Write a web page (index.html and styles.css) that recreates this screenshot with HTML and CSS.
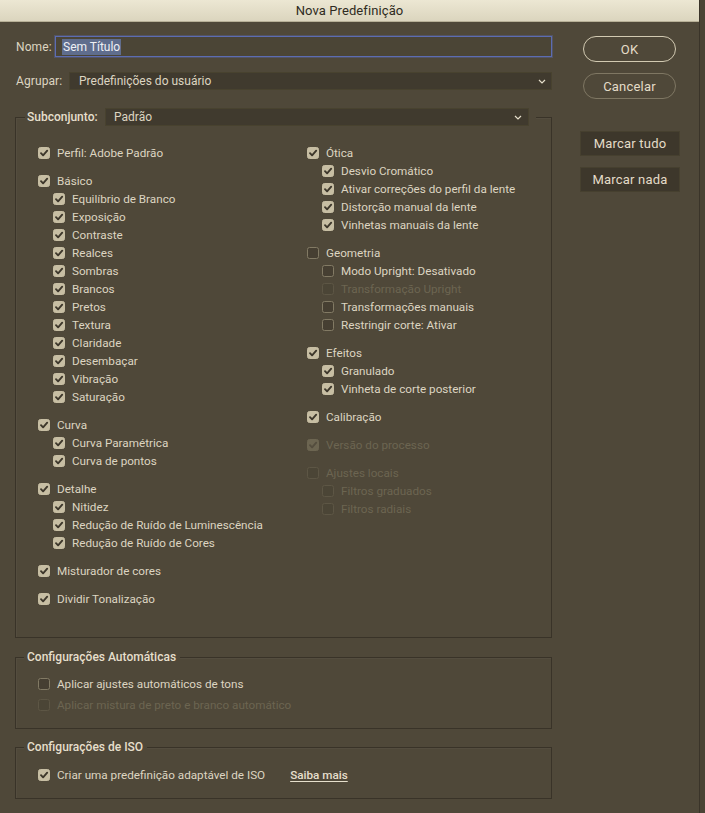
FILE: index.html
```html
<!DOCTYPE html>
<html lang="pt">
<head>
<meta charset="utf-8">
<title>Nova Predefinição</title>
<link rel="stylesheet" href="styles.css">
</head>
<body>
<div class="window">
  <div class="titlebar">Nova Predefinição</div>
  <div class="main">
    <div class="left">
      <div class="field-row name-row">
        <span class="field-label name-label">Nome:</span>
        <div class="text-input"><span class="selected">Sem Título</span></div>
      </div>
      <div class="field-row group-row">
        <span class="field-label group-label">Agrupar:</span>
        <div class="select wide-select"><span>Predefinições do usuário</span><svg class="chev" width="8" height="5" viewBox="0 0 8 5"><path d="M1 1 L4 4 L7 1" fill="none" stroke="#e6dfcc" stroke-width="1.2"/></svg></div>
      </div>

      <div class="box subset-box">
        <div class="box-head subset-head">
          <span class="box-title subset-title">Subconjunto:</span>
          <div class="select subset-select"><span>Padrão</span><svg class="chev" width="8" height="5" viewBox="0 0 8 5"><path d="M1 1 L4 4 L7 1" fill="none" stroke="#e6dfcc" stroke-width="1.2"/></svg></div>
        </div>
        <div class="columns">
          <div class="col col-left">
            <div class="grp">
              <div class="item on"><span class="chk"><svg viewBox="0 0 12 12"><path d="M3 6.2 L5.1 8.3 L9.2 3.7"/></svg></span>Perfil: Adobe Padrão</div>
            </div>
            <div class="grp">
              <div class="item on"><span class="chk"><svg viewBox="0 0 12 12"><path d="M3 6.2 L5.1 8.3 L9.2 3.7"/></svg></span>Básico</div>
              <div class="item sub on"><span class="chk"><svg viewBox="0 0 12 12"><path d="M3 6.2 L5.1 8.3 L9.2 3.7"/></svg></span>Equilíbrio de Branco</div>
              <div class="item sub on"><span class="chk"><svg viewBox="0 0 12 12"><path d="M3 6.2 L5.1 8.3 L9.2 3.7"/></svg></span>Exposição</div>
              <div class="item sub on"><span class="chk"><svg viewBox="0 0 12 12"><path d="M3 6.2 L5.1 8.3 L9.2 3.7"/></svg></span>Contraste</div>
              <div class="item sub on"><span class="chk"><svg viewBox="0 0 12 12"><path d="M3 6.2 L5.1 8.3 L9.2 3.7"/></svg></span>Realces</div>
              <div class="item sub on"><span class="chk"><svg viewBox="0 0 12 12"><path d="M3 6.2 L5.1 8.3 L9.2 3.7"/></svg></span>Sombras</div>
              <div class="item sub on"><span class="chk"><svg viewBox="0 0 12 12"><path d="M3 6.2 L5.1 8.3 L9.2 3.7"/></svg></span>Brancos</div>
              <div class="item sub on"><span class="chk"><svg viewBox="0 0 12 12"><path d="M3 6.2 L5.1 8.3 L9.2 3.7"/></svg></span>Pretos</div>
              <div class="item sub on"><span class="chk"><svg viewBox="0 0 12 12"><path d="M3 6.2 L5.1 8.3 L9.2 3.7"/></svg></span>Textura</div>
              <div class="item sub on"><span class="chk"><svg viewBox="0 0 12 12"><path d="M3 6.2 L5.1 8.3 L9.2 3.7"/></svg></span>Claridade</div>
              <div class="item sub on"><span class="chk"><svg viewBox="0 0 12 12"><path d="M3 6.2 L5.1 8.3 L9.2 3.7"/></svg></span>Desembaçar</div>
              <div class="item sub on"><span class="chk"><svg viewBox="0 0 12 12"><path d="M3 6.2 L5.1 8.3 L9.2 3.7"/></svg></span>Vibração</div>
              <div class="item sub on"><span class="chk"><svg viewBox="0 0 12 12"><path d="M3 6.2 L5.1 8.3 L9.2 3.7"/></svg></span>Saturação</div>
            </div>
            <div class="grp">
              <div class="item on"><span class="chk"><svg viewBox="0 0 12 12"><path d="M3 6.2 L5.1 8.3 L9.2 3.7"/></svg></span>Curva</div>
              <div class="item sub on"><span class="chk"><svg viewBox="0 0 12 12"><path d="M3 6.2 L5.1 8.3 L9.2 3.7"/></svg></span>Curva Paramétrica</div>
              <div class="item sub on"><span class="chk"><svg viewBox="0 0 12 12"><path d="M3 6.2 L5.1 8.3 L9.2 3.7"/></svg></span>Curva de pontos</div>
            </div>
            <div class="grp">
              <div class="item on"><span class="chk"><svg viewBox="0 0 12 12"><path d="M3 6.2 L5.1 8.3 L9.2 3.7"/></svg></span>Detalhe</div>
              <div class="item sub on"><span class="chk"><svg viewBox="0 0 12 12"><path d="M3 6.2 L5.1 8.3 L9.2 3.7"/></svg></span>Nitidez</div>
              <div class="item sub on"><span class="chk"><svg viewBox="0 0 12 12"><path d="M3 6.2 L5.1 8.3 L9.2 3.7"/></svg></span>Redução de Ruído de Luminescência</div>
              <div class="item sub on"><span class="chk"><svg viewBox="0 0 12 12"><path d="M3 6.2 L5.1 8.3 L9.2 3.7"/></svg></span>Redução de Ruído de Cores</div>
            </div>
            <div class="grp">
              <div class="item on"><span class="chk"><svg viewBox="0 0 12 12"><path d="M3 6.2 L5.1 8.3 L9.2 3.7"/></svg></span>Misturador de cores</div>
            </div>
            <div class="grp">
              <div class="item on"><span class="chk"><svg viewBox="0 0 12 12"><path d="M3 6.2 L5.1 8.3 L9.2 3.7"/></svg></span>Dividir Tonalização</div>
            </div>
          </div>

          <div class="col col-right">
            <div class="grp">
              <div class="item on"><span class="chk"><svg viewBox="0 0 12 12"><path d="M3 6.2 L5.1 8.3 L9.2 3.7"/></svg></span>Ótica</div>
              <div class="item sub on"><span class="chk"><svg viewBox="0 0 12 12"><path d="M3 6.2 L5.1 8.3 L9.2 3.7"/></svg></span>Desvio Cromático</div>
              <div class="item sub on"><span class="chk"><svg viewBox="0 0 12 12"><path d="M3 6.2 L5.1 8.3 L9.2 3.7"/></svg></span>Ativar correções do perfil da lente</div>
              <div class="item sub on"><span class="chk"><svg viewBox="0 0 12 12"><path d="M3 6.2 L5.1 8.3 L9.2 3.7"/></svg></span>Distorção manual da lente</div>
              <div class="item sub on"><span class="chk"><svg viewBox="0 0 12 12"><path d="M3 6.2 L5.1 8.3 L9.2 3.7"/></svg></span>Vinhetas manuais da lente</div>
            </div>
            <div class="grp">
              <div class="item"><span class="chk"></span>Geometria</div>
              <div class="item sub"><span class="chk"></span>Modo Upright: Desativado</div>
              <div class="item sub disabled"><span class="chk"></span>Transformação Upright</div>
              <div class="item sub"><span class="chk"></span>Transformações manuais</div>
              <div class="item sub"><span class="chk"></span>Restringir corte: Ativar</div>
            </div>
            <div class="grp">
              <div class="item on"><span class="chk"><svg viewBox="0 0 12 12"><path d="M3 6.2 L5.1 8.3 L9.2 3.7"/></svg></span>Efeitos</div>
              <div class="item sub on"><span class="chk"><svg viewBox="0 0 12 12"><path d="M3 6.2 L5.1 8.3 L9.2 3.7"/></svg></span>Granulado</div>
              <div class="item sub on"><span class="chk"><svg viewBox="0 0 12 12"><path d="M3 6.2 L5.1 8.3 L9.2 3.7"/></svg></span>Vinheta de corte posterior</div>
            </div>
            <div class="grp">
              <div class="item on"><span class="chk"><svg viewBox="0 0 12 12"><path d="M3 6.2 L5.1 8.3 L9.2 3.7"/></svg></span>Calibração</div>
            </div>
            <div class="grp">
              <div class="item on disabled"><span class="chk"><svg viewBox="0 0 12 12"><path d="M3 6.2 L5.1 8.3 L9.2 3.7"/></svg></span>Versão do processo</div>
            </div>
            <div class="grp">
              <div class="item disabled"><span class="chk"></span>Ajustes locais</div>
              <div class="item sub disabled"><span class="chk"></span>Filtros graduados</div>
              <div class="item sub disabled"><span class="chk"></span>Filtros radiais</div>
            </div>
          </div>
        </div>
      </div>

      <div class="box auto-box">
        <div class="box-head"><span class="box-title">Configurações Automáticas</span></div>
        <div class="box-rows">
          <div class="item"><span class="chk"></span>Aplicar ajustes automáticos de tons</div>
          <div class="item disabled"><span class="chk"></span>Aplicar mistura de preto e branco automático</div>
        </div>
      </div>

      <div class="box iso-box">
        <div class="box-head"><span class="box-title">Configurações de ISO</span></div>
        <div class="box-rows iso-rows">
          <div class="item on"><span class="chk"><svg viewBox="0 0 12 12"><path d="M3 6.2 L5.1 8.3 L9.2 3.7"/></svg></span>Criar uma predefinição adaptável de ISO<a class="link" href="#">Saiba mais</a></div>
        </div>
      </div>
    </div>

    <div class="right">
      <button class="pill ok">OK</button>
      <button class="pill cancel">Cancelar</button>
      <button class="flat mark-all">Marcar tudo</button>
      <button class="flat mark-none">Marcar nada</button>
    </div>
  </div>
</div>
</body>
</html>
```

FILE: styles.css
```css
* { box-sizing: border-box; }

html, body {
  margin: 0;
  padding: 0;
}

body {
  background: #4a4435;
  font-family: Roboto, "Liberation Sans", sans-serif;
  font-size: 11.7px;
  letter-spacing: 0;
  color: #ddd5c1;
}

.window {
  width: 700px;
  height: 813px;
  background: #4f4839;
  border-right: 1px solid #3a3429;
}

.titlebar {
  height: 22px;
  display: flex;
  align-items: center;
  justify-content: center;
  font-size: 13px;
  letter-spacing: 0.1px;
  color: #2f2b22;
  background: linear-gradient(#ece7d3, #dbd5be);
  border-bottom: 1px solid #b7b097;
}

.main {
  display: flex;
  padding-left: 15px;
}

.left {
  width: 537px;
  flex: 0 0 537px;
}

.field-row {
  display: flex;
  align-items: center;
}

.field-label {
  padding-left: 1px;
  color: #ddd5c1;
  font-size: 12px;
  letter-spacing: 0.1px;
}

.name-row {
  margin-top: 14px;
  height: 21px;
}

.name-label { flex: 0 0 40px; }

.text-input {
  flex: 1;
  height: 21px;
  border: 1px solid #5c6cb2;
  box-shadow: 0 0 0 1px rgba(92, 108, 178, 0.35);
  background: #4b4536;
  padding-left: 6px;
  display: flex;
  align-items: center;
  font-size: 12px;
}

.selected {
  background: #5f6d8d;
  color: #eef0f4;
  line-height: 16px;
  padding: 0 1px;
}

.group-row {
  margin-top: 15px;
  height: 18px;
}

.group-label { flex: 0 0 54px; }

.select {
  height: 18px;
  background: #403a2e;
  border: 1px solid #48422f;
  display: flex;
  align-items: center;
  justify-content: space-between;
  padding: 0 5px 0 9px;
  font-size: 12px;
}

.wide-select { flex: 1; }

.chev { flex: 0 0 auto; }

/* group boxes */
.box {
  border: 1px solid #393328;
  box-shadow: inset 1px 1px 0 rgba(255, 255, 255, 0.03);
}

.box-head {
  display: flex;
  align-items: center;
  width: fit-content;
  background: #4f4839;
  margin-left: 8px;
  padding: 0 4px 0 3px;
  height: 16px;
  margin-top: -9px;
}

.box-title {
  font-weight: 500;
  font-size: 12px;
  color: #e6dfcc;
}

.subset-box {
  margin-top: 27px;
  padding-bottom: 29px;
}

.subset-head {
  height: 18px;
  margin-top: -10px;
  margin-left: 9px;
  padding: 0 7px 0 2px;
}

.subset-title { width: 78px; }

.subset-select {
  width: 424px;
  padding-left: 8px;
  padding-right: 6px;
}

.columns {
  display: flex;
  margin-top: 18px;
}

.col-left {
  width: 291px;
  padding-left: 22px;
}

.grp + .grp { margin-top: 10px; }

.item {
  display: flex;
  align-items: center;
  height: 18px;
  white-space: nowrap;
}

.item.sub { padding-left: 15px; }

.chk {
  flex: 0 0 12px;
  width: 12px;
  height: 12px;
  margin-right: 7px;
  border-radius: 2.5px;
  border: 1px solid #827a64;
  background: #463f32;
  display: flex;
}

.chk svg {
  width: 12px;
  height: 12px;
  margin: -1px;
}

.chk path {
  fill: none;
  stroke: #3d372b;
  stroke-width: 1.9;
  stroke-linecap: round;
  stroke-linejoin: round;
}

.item.on .chk {
  background: #c7bea3;
  border-color: #c7bea3;
}

.item.disabled {
  color: #6c6551;
}

.item.disabled .chk {
  border-color: #5d5645;
  background: #4b4536;
}

.item.on.disabled .chk {
  background: #6c6551;
  border-color: #6c6551;
}

.item.on.disabled .chk path {
  stroke: #544d3e;
}

.auto-box {
  margin-top: 19px;
  padding-bottom: 14px;
}

.box-rows {
  padding-left: 22px;
  margin-top: 10px;
  display: flex;
  flex-direction: column;
  gap: 3px;
}

.iso-box {
  margin-top: 18px;
  padding-bottom: 14px;
}

.iso-rows { margin-top: 11px; }

.link {
  margin-left: 25px;
  color: #e6dfcc;
  font-weight: 500;
  text-decoration: underline;
  text-underline-offset: 2px;
}

/* right column buttons */
.right {
  margin-left: 26px;
  padding-top: 14px;
  display: flex;
  flex-direction: column;
  align-items: flex-start;
}

button {
  font-family: Roboto, "Liberation Sans", sans-serif;
  font-size: 13px;
  letter-spacing: 0.2px;
  color: #e4dcc8;
  cursor: default;
}

.pill {
  width: 93px;
  height: 26px;
  margin-left: 5px;
  border-radius: 13px;
  background: transparent;
  border: 1.5px solid #d2cab2;
  padding: 0;
}

.pill.cancel {
  margin-top: 11px;
  border-color: #7f7763;
}

.flat {
  width: 100px;
  height: 25px;
  margin-left: 2px;
  background: #3d372b;
  border: 1px solid #46402f;
  padding: 0;
}

.mark-all { margin-top: 32px; }
.mark-none { margin-top: 11px; }
```
